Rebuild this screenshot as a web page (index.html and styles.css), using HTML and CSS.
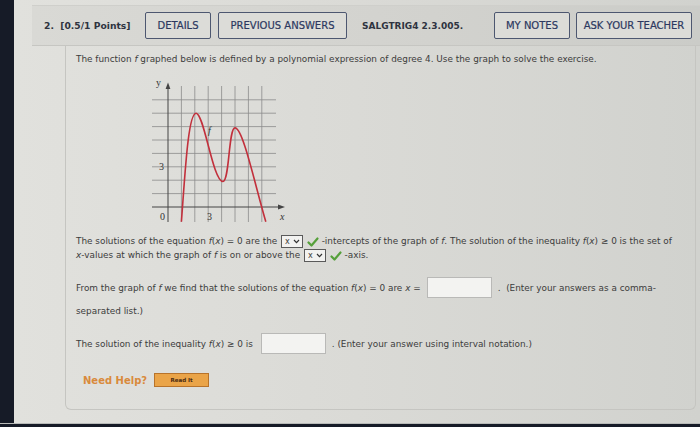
FILE: index.html
```html
<!DOCTYPE html>
<html>
<head>
<meta charset="utf-8">
<link rel="stylesheet" href="styles.css">
</head>
<body>
<div class="screen">
  <div class="header">
    <div class="points">2. &nbsp;[0.5/1 Points]</div>
    <div class="btn btn-details">DETAILS</div>
    <div class="btn btn-prev">PREVIOUS ANSWERS</div>
    <div class="code">SALGTRIG4 2.3.005.</div>
    <div class="btn btn-notes">MY NOTES</div>
    <div class="btn btn-ask">ASK YOUR TEACHER</div>
  </div>
  <div class="panel">
    <p class="intro">The function <i>f</i> graphed below is defined by a polynomial expression of degree 4. Use the graph to solve the exercise.</p>
    <svg class="graph" width="142" height="150" viewBox="0 0 142 150">
      <g stroke="#8a8a8a" stroke-width="0.8" fill="none">
        <line x1="34.4" y1="11" x2="34.4" y2="147"/>
        <line x1="47.8" y1="11" x2="47.8" y2="147"/>
        <line x1="61.2" y1="11" x2="61.2" y2="147"/>
        <line x1="74.6" y1="11" x2="74.6" y2="147"/>
        <line x1="88" y1="11" x2="88" y2="147"/>
        <line x1="101.4" y1="11" x2="101.4" y2="147"/>
        <line x1="114.8" y1="11" x2="114.8" y2="147"/>
        <line x1="5" y1="118.6" x2="129" y2="118.6"/>
        <line x1="5" y1="105.2" x2="129" y2="105.2"/>
        <line x1="5" y1="91.8" x2="129" y2="91.8"/>
        <line x1="5" y1="78.4" x2="129" y2="78.4"/>
        <line x1="5" y1="65" x2="129" y2="65"/>
        <line x1="5" y1="51.6" x2="129" y2="51.6"/>
        <line x1="5" y1="38.2" x2="129" y2="38.2"/>
        <line x1="5" y1="24.8" x2="129" y2="24.8"/>
      </g>
      <g stroke="#444" stroke-width="1" fill="none">
        <line x1="21" y1="147" x2="21" y2="13"/>
        <line x1="5" y1="132" x2="132" y2="132"/>
      </g>
      <polygon points="21,7.5 18.6,14 23.4,14" fill="#444"/>
      <polygon points="138,132 131,129.6 131,134.4" fill="#444"/>
      <path d="M34.4,146.7 C38,100 41,38.2 49.1,38.2 C57,38.2 66,106.5 75.9,106.5 C82.5,106.5 81.5,52.9 88,52.9 C96,52.9 108,110 118.8,146.7" stroke="#c2303c" stroke-width="1.6" fill="none"/>
      <g font-family="Liberation Serif, serif" font-size="10" fill="#333">
        <text x="9" y="11">y</text>
        <text x="61" y="59" font-style="italic">f</text>
        <text x="12" y="95">3</text>
        <text x="13" y="145">0</text>
        <text x="60" y="145">3</text>
        <text x="133" y="145" font-style="italic">x</text>
      </g>
    </svg>
    <p class="sol">The solutions of the equation <span class="m"><i>f</i>(<i>x</i>) = 0</span> are the <span class="sel">x<svg class="chev" width="7" height="5" viewBox="0 0 7 5"><path d="M1 1 L3.5 3.6 L6 1" stroke="#333" stroke-width="1.2" fill="none"/></svg></span><svg class="check" width="12" height="10" viewBox="0 0 12 10"><path d="M1.5 5.5 L4.5 8.5 L10.5 1.5" stroke="#55a03a" stroke-width="2.2" fill="none" stroke-linecap="round" stroke-linejoin="round"/></svg> -intercepts of the graph of <i>f</i>. The solution of the inequality <span class="m"><i>f</i>(<i>x</i>) ≥ 0</span> is the set of<br><i>x</i>-values at which the graph of <i>f</i> is on or above the <span class="sel">x<svg class="chev" width="7" height="5" viewBox="0 0 7 5"><path d="M1 1 L3.5 3.6 L6 1" stroke="#333" stroke-width="1.2" fill="none"/></svg></span><svg class="check" width="12" height="10" viewBox="0 0 12 10"><path d="M1.5 5.5 L4.5 8.5 L10.5 1.5" stroke="#55a03a" stroke-width="2.2" fill="none" stroke-linecap="round" stroke-linejoin="round"/></svg> -axis.</p>
    <div class="row row1">
      <span>From the graph of <i>f</i> we find that the solutions of the equation <span class="m"><i>f</i>(<i>x</i>) = 0</span> are <i>x</i> =</span>
      <span class="inp inp1"></span>
      <span>. &nbsp;(Enter your answers as a comma-</span>
    </div>
    <p class="cont">separated list.)</p>
    <div class="row row2">
      <span>The solution of the inequality <span class="m"><i>f</i>(<i>x</i>) ≥ 0</span> is</span>
      <span class="inp inp2"></span>
      <span>. (Enter your answer using interval notation.)</span>
    </div>
    <div class="help">
      <span class="need">Need Help?</span>
      <span class="read">Read It</span>
    </div>
  </div>
</div>
<div class="bottom"></div>
</body>
</html>
```

FILE: styles.css
```css
html, body {
  margin: 0;
  padding: 0;
  background: #161b27;
  width: 700px;
  height: 427px;
  overflow: hidden;
}
.screen {
  margin-left: 14px;
  height: 423px;
  background: linear-gradient(90deg, #e1e1dd 0%, #dadad6 50%, #d1d2ce 100%);
  font-family: "DejaVu Sans", Verdana, sans-serif;
  color: #3a3a3a;
  overflow: hidden;
  box-sizing: border-box;
  padding-top: 5px;
}
.bottom {
  height: 1px;
  background: #b8bab8;
}
.header {
  margin-left: 18px;
  height: 41px;
  box-sizing: border-box;
  border-top: 1px solid #cfcfcb;
  border-bottom: 1px solid #c6c6c2;
  background: linear-gradient(90deg, #d9d9d5 0%, #d2d2ce 60%, #cbccc8 100%);
  display: flex;
  align-items: center;
  padding-left: 12px;
}
.points {
  width: 101px;
  font-weight: bold;
  font-size: 9.2px;
  color: #2e3340;
}
.code {
  width: 132px;
  margin-left: 15px;
  font-weight: bold;
  font-size: 9px;
  color: #2e3340;
}
.btn {
  height: 27px;
  box-sizing: border-box;
  border: 1.5px solid #4d5770;
  border-radius: 2px;
  display: flex;
  align-items: center;
  justify-content: center;
  font-size: 10px;
  color: #2c3860;
  background: #dcdcd8;
  -webkit-text-stroke: 0.2px #2c3860;
}
.btn-details { width: 66px; }
.btn-prev { width: 129px; margin-left: 7px; }
.btn-notes { width: 76px; }
.btn-ask { width: 116px; margin-left: 6px; }
.panel {
  margin-left: 51px;
  margin-right: 4px;
  height: 364px;
  box-sizing: border-box;
  border: 1px solid #c5c5c1;
  border-top: none;
  border-radius: 0 0 6px 6px;
  padding: 6px 0 0 10px;
  font-size: 8.9px;
  color: #3c3c3c;
}
.intro {
  margin: 0;
  line-height: 14px;
}
.graph {
  display: block;
  margin: 9px 0 0 71px;
}
.sol {
  margin: 9px 0 0 0;
  line-height: 14px;
}
.m i { font-style: italic; }
.sel {
  display: inline-flex;
  align-items: center;
  gap: 3px;
  height: 11px;
  padding: 0 2px 0 3px;
  border: 1px solid #5a5a5a;
  background: #f2f2f0;
  vertical-align: middle;
  line-height: 11px;
  font-size: 8px;
  margin-left: 1px;
}
.chev { display: block; }
.check {
  vertical-align: middle;
  margin-left: 4px;
}
.row {
  display: flex;
  align-items: center;
  white-space: pre;
}
.row1 { margin-top: 15px; }
.row2 { margin-top: 15px; }
.inp {
  display: block;
  height: 21px;
  box-sizing: border-box;
  border: 1px solid #b9b9b7;
  background: #f3f3f1;
  margin: 0 6px 0 6px;
}
.inp1 { width: 65px; }
.inp2 { width: 65px; margin-left: 8px; }
.cont {
  margin: 6px 0 0 0;
  line-height: 14px;
}
.help {
  margin: 18px 0 0 7px;
  display: flex;
  align-items: center;
  gap: 7px;
  height: 16px;
}
.need {
  font-size: 10px;
  font-weight: bold;
  color: #d98a3c;
}
.read {
  width: 55px;
  height: 14px;
  box-sizing: border-box;
  border: 1px solid #b8732a;
  background: #eaa448;
  font-size: 5.5px;
  font-weight: bold;
  color: #4a2a10;
  display: flex;
  align-items: center;
  justify-content: center;
}
```
